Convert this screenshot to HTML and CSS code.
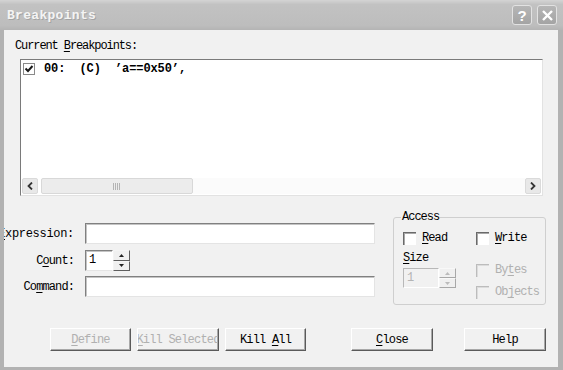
FILE: index.html
```html
<!DOCTYPE html>
<html lang="en">
<head>
    <meta charset="UTF-8">
    <title>Breakpoints</title>
    <link rel="stylesheet" href="styles.css">
</head>
<body>
    <div class="window">
        <div class="titlebar">
            <span class="title">Breakpoints</span>
            <div class="title-buttons">
                <span class="tbtn tbtn-help">?</span>
                <span class="tbtn">
                    <svg width="11" height="11" viewBox="0 0 11 11"><path d="M1 1 L10 10 M10 1 L1 10" stroke="#fff" stroke-width="2.4" fill="none"/></svg>
                </span>
            </div>
        </div>

        <div class="frame">
            <div class="content">
                <div class="caption">Current <u>B</u>reakpoints:</div>

                <!-- list of breakpoints -->
                <div class="list">
                    <div class="entries">
                        <div class="entry">
                            <span class="check">
                                <svg width="10" height="10" viewBox="0 0 10 10"><path d="M1.5 4.5 L4 7 L8.5 2" stroke="#1a1a1a" stroke-width="2" fill="none"/></svg>
                            </span>
                            <span class="entry-text">00:  (C)  ’a==0x50’,</span>
                        </div>
                    </div>
                    <div class="hscroll">
                        <span class="sb-arrow">
                            <svg width="6" height="8" viewBox="0 0 6 8"><path d="M5 0.5 L1.5 4 L5 7.5" stroke="#333" stroke-width="1.8" fill="none"/></svg>
                        </span>
                        <span class="sb-thumb"><span class="grip"></span></span>
                        <span class="sb-track"></span>
                        <span class="sb-arrow">
                            <svg width="6" height="8" viewBox="0 0 6 8"><path d="M1 0.5 L4.5 4 L1 7.5" stroke="#333" stroke-width="1.8" fill="none"/></svg>
                        </span>
                    </div>
                </div>

                <div class="form-area">
                    <div class="fields">
                        <div class="field">
                            <div class="field-label wide-label"><span><u>E</u>xpression:</span></div>
                            <div class="textbox wide"></div>
                        </div>
                        <div class="field">
                            <div class="field-label"><span>C<u>o</u>unt:</span></div>
                            <div class="spin count">
                                <div class="spin-text">1</div>
                                <div class="spin-btns">
                                    <span class="spin-btn"><svg width="5" height="3" viewBox="0 0 5 3"><path d="M0 3 L2.5 0 L5 3Z" fill="#222"/></svg></span>
                                    <span class="spin-btn"><svg width="5" height="3" viewBox="0 0 5 3"><path d="M0 0 L2.5 3 L5 0Z" fill="#222"/></svg></span>
                                </div>
                            </div>
                        </div>
                        <div class="field last">
                            <div class="field-label"><span>Co<u>m</u>mand:</span></div>
                            <div class="textbox wide"></div>
                        </div>
                    </div>

                    <fieldset class="access">
                        <legend>Access</legend>
                        <div class="access-cols">
                            <div class="col1">
                                <div class="cb-item"><span class="sbox"></span><span><u>R</u>ead</span></div>
                                <div class="size-label"><u>S</u>ize</div>
                                <div class="spin size disabled">
                                    <div class="spin-text">1</div>
                                    <div class="spin-btns">
                                        <span class="spin-btn"><svg width="5" height="3" viewBox="0 0 5 3"><path d="M0 3 L2.5 0 L5 3Z" fill="#bbb"/></svg></span>
                                        <span class="spin-btn"><svg width="5" height="3" viewBox="0 0 5 3"><path d="M0 0 L2.5 3 L5 0Z" fill="#bbb"/></svg></span>
                                    </div>
                                </div>
                            </div>
                            <div class="col2">
                                <div class="cb-item"><span class="sbox"></span><span><u>W</u>rite</span></div>
                                <div class="cb-item disabled bytes"><span class="sbox"></span><span>By<u>t</u>es</span></div>
                                <div class="cb-item disabled objects"><span class="sbox"></span><span>Ob<u>j</u>ects</span></div>
                            </div>
                        </div>
                    </fieldset>
                </div>

                <div class="buttons">
                    <div class="btn disabled"><span><u>D</u>efine</span></div>
                    <div class="btn disabled wide kill-sel"><span><u>K</u>ill Selected</span></div>
                    <div class="btn kill-all"><span>Kill <u>A</u>ll</span></div>
                    <div class="btn wide close"><span><u>C</u>lose</span></div>
                    <div class="btn wide help"><span>Help</span></div>
                </div>
            </div>
        </div>
    </div>
</body>
</html>
```

FILE: styles.css
```css
body {
    margin: 0;
    font-family: "Liberation Mono", monospace;
    font-size: 12px;
    color: #000;
    background: #fff;
}
u {
    text-underline-offset: 2px;
}
.window {
    width: 563px;
    height: 370px;
    display: flex;
    flex-direction: column;
    overflow: hidden;
}

/* title bar */
.titlebar {
    height: 30px;
    flex: none;
    display: flex;
    align-items: center;
    justify-content: space-between;
    padding: 0 6px 0 7px;
    box-sizing: border-box;
    background: linear-gradient(#d4d4d4, #c2c2c2 15%, #bdbdbd 85%, #b4b4b4);
}
.title {
    color: #f4f4f4;
    font-weight: bold;
    font-size: 13px;
    letter-spacing: 0.3px;
    text-shadow: 1px 1px 0 #a4a4a4;
}
.title-buttons {
    display: flex;
    gap: 5px;
}
.tbtn {
    width: 20px;
    height: 20px;
    box-sizing: border-box;
    border: 1px solid #e2e2e2;
    border-radius: 3px;
    background: linear-gradient(#b6b6b6, #a4a4a4);
    display: flex;
    align-items: center;
    justify-content: center;
}
.tbtn-help {
    color: #fff;
    font: bold 15px "Liberation Sans", sans-serif;
}

/* window frame and client area */
.frame {
    flex: 1;
    display: flex;
    padding: 0 5px 3px 4px;
    background: #b2b2b2;
}
.content {
    flex: 1;
    background: #f1f1f1;
    overflow: hidden;
    padding-top: 9px;
    box-sizing: border-box;
}
.caption {
    margin-left: 11px;
    line-height: 14px;
    letter-spacing: -1.1px;
}

/* breakpoint list */
.list {
    margin: 6px 0 0 16px;
    width: 523px;
    height: 137px;
    box-sizing: border-box;
    border: 1px solid;
    border-color: #7a7a7a #e2e2e2 #e2e2e2 #7a7a7a;
    background: #fff;
    display: flex;
    flex-direction: column;
    padding: 0 1px 1px 1px;
}
.entries {
    flex: 1;
    padding: 2px 0 0 1px;
}
.entry {
    display: flex;
    align-items: center;
    gap: 9px;
    height: 13px;
}
.check {
    width: 12px;
    height: 12px;
    box-sizing: border-box;
    border: 1px solid #8a8a8a;
    background: #fff;
    display: flex;
    align-items: center;
    justify-content: center;
}
.entry-text {
    font-weight: bold;
    white-space: pre;
    letter-spacing: -0.1px;
}
.hscroll {
    height: 16px;
    display: flex;
}
.sb-arrow {
    width: 16px;
    box-sizing: border-box;
    border: 1px solid #dadada;
    border-radius: 2px;
    background: #e8e8e8;
    display: flex;
    align-items: center;
    justify-content: center;
}
.sb-thumb {
    margin-left: 3px;
    width: 152px;
    box-sizing: border-box;
    border: 1px solid #d8d8d8;
    border-radius: 2px;
    background: #ececec;
    display: flex;
    align-items: center;
    justify-content: center;
}
.grip {
    width: 8px;
    height: 7px;
    background: repeating-linear-gradient(90deg, #b4b4b4 0 1px, transparent 1px 2px);
}
.sb-track {
    flex: 1;
    background: #fbfbfb;
}

/* fields below the list */
.form-area {
    display: flex;
    align-items: flex-start;
    margin-top: 15px;
}
.fields {
    width: 371px;
    flex: none;
    padding-top: 12px;
    display: flex;
    flex-direction: column;
}
.field {
    display: flex;
    align-items: center;
    height: 21px;
}
.field + .field {
    margin-top: 6px;
}
.field.last {
    margin-top: 5px;
}
.field-label {
    width: 70px;
    flex: none;
    margin-right: 11px;
    display: flex;
    justify-content: flex-end;
    white-space: nowrap;
    letter-spacing: -0.9px;
}
.field-label.wide-label {
    letter-spacing: -0.3px;
}
.field-label span {
    flex: none;
}
.textbox {
    height: 21px;
    box-sizing: border-box;
    border: 1px solid;
    border-color: #808080 #e4e4e4 #e4e4e4 #808080;
    box-shadow: inset 1px 1px #c4c4c4;
    background: #fff;
}
.textbox.wide {
    width: 290px;
}

/* spin controls */
.spin {
    display: flex;
    height: 21px;
}
.spin.count {
    width: 45px;
}
.spin-text {
    flex: 1;
    box-sizing: border-box;
    border: 1px solid;
    border-color: #808080 #fff #e4e4e4 #808080;
    box-shadow: inset 1px 1px #c4c4c4;
    background: #fff;
    padding: 2px 0 0 3px;
    line-height: 14px;
}
.spin-btns {
    width: 17px;
    display: flex;
    flex-direction: column;
}
.spin-btn {
    flex: 1;
    box-sizing: border-box;
    border: 1px solid;
    border-color: #f4f4f4 #5e5e5e #5e5e5e #f4f4f4;
    background: #f0f0f0;
    display: flex;
    align-items: center;
    justify-content: center;
}
.spin.size {
    width: 53px;
    height: 20px;
    margin-top: 3px;
}
.spin.disabled .spin-text {
    background: #f1f1f1;
    color: #b4b4b4;
    border-color: #b8b8b8 #fff #fff #b8b8b8;
    box-shadow: none;
}
.spin.disabled .spin-btn {
    border-color: #f8f8f8 #a8a8a8 #a8a8a8 #f8f8f8;
}

/* access group */
.access {
    margin: 0 0 0 18px;
    width: 153px;
    box-sizing: border-box;
    border: 1px solid #cfcfcf;
    border-radius: 3px;
    padding: 8px 0 5px 9px;
}
.access legend {
    padding: 0 1px;
    margin-left: -2px;
    line-height: 12px;
    letter-spacing: -1px;
}
.access-cols {
    display: flex;
}
.col1 {
    width: 73px;
}
.cb-item {
    display: flex;
    align-items: center;
    gap: 6px;
    height: 14px;
    letter-spacing: -0.9px;
}
.sbox {
    width: 13px;
    height: 13px;
    flex: none;
    box-sizing: border-box;
    border-top: 1px solid #6a6a6a;
    border-left: 1px solid #6a6a6a;
    box-shadow: inset 1px 1px #a8a8a8;
    background: #fff;
}
.cb-item.disabled {
    color: #b0b0b0;
}
.cb-item.disabled .sbox {
    border-color: #bcbcbc;
    box-shadow: inset 1px 1px #dcdcdc;
    background: #f1f1f1;
}
.cb-item.bytes {
    margin-top: 18px;
}
.cb-item.objects {
    margin-top: 8px;
}
.size-label {
    margin-top: 6px;
    line-height: 14px;
    letter-spacing: -0.9px;
}

/* dialog buttons */
.buttons {
    display: flex;
    margin: 23px 0 0 46px;
}
.btn {
    width: 81px;
    height: 23px;
    flex: none;
    box-sizing: border-box;
    border: 1px solid;
    border-color: #fff #5a5a5a #5a5a5a #fff;
    box-shadow: inset -1px -1px #a8a8a8;
    background: #f1f1f1;
    display: flex;
    align-items: center;
    justify-content: center;
    overflow: hidden;
    white-space: nowrap;
    letter-spacing: -0.8px;
}
.btn span {
    flex: none;
}
.btn.wide {
    width: 82px;
}
.btn.disabled {
    color: #b0b0b0;
}
.kill-sel,
.kill-all {
    margin-left: 6px;
}
.close {
    margin-left: 45px;
}
.help {
    margin-left: 31px;
}
```
